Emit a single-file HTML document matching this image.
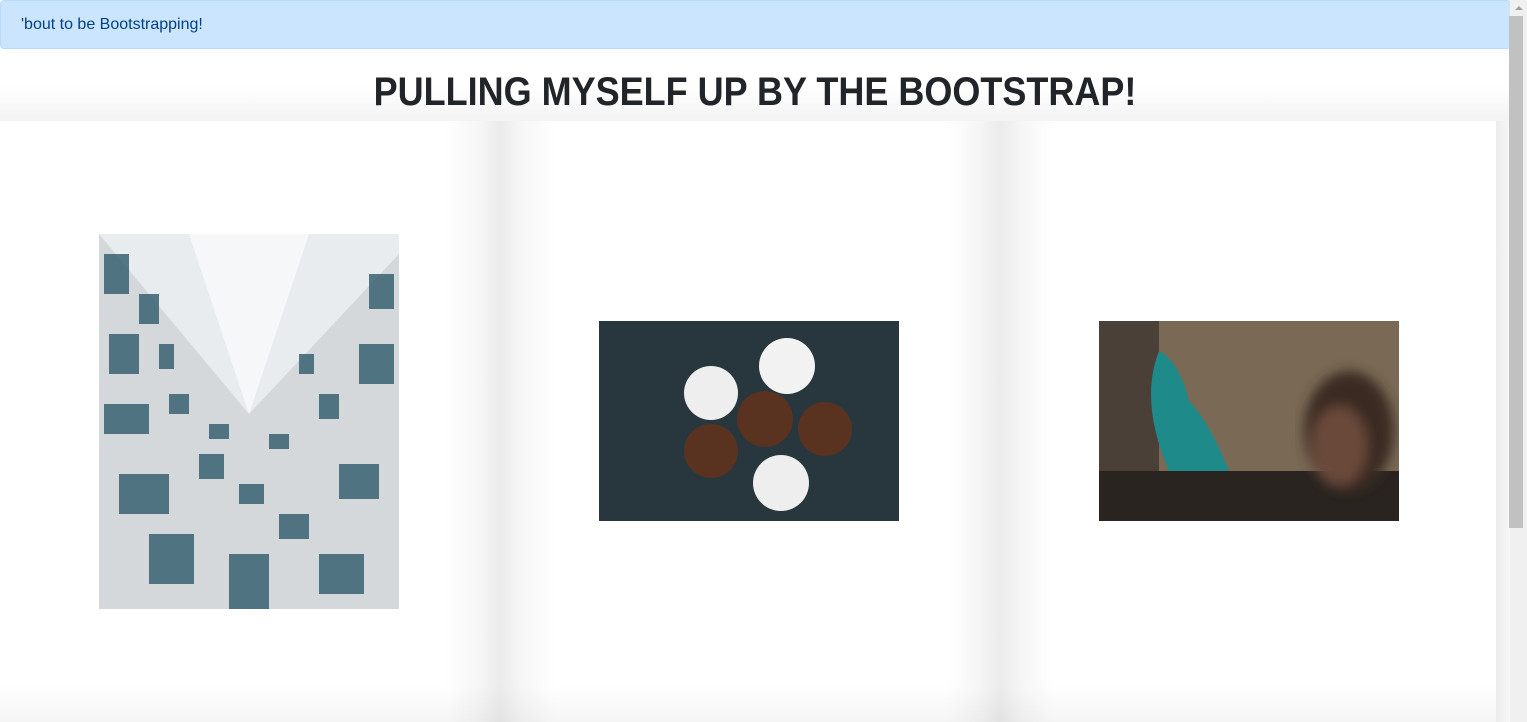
<!DOCTYPE html>
<html><head><style>
*{box-sizing:border-box;margin:0;padding:0}
html,body{width:1527px;height:722px;overflow:hidden;background:#fff;font-family:"Liberation Sans",sans-serif}
.alert{position:absolute;left:0;top:0;width:1511px;height:49px;background:#cce5ff;border:1px solid #b8daff;border-radius:4px;color:#004085;font-size:16px;padding:13px 20px;line-height:22px}
h1{position:absolute;left:0;width:1510px;top:67px;text-align:center;font-size:40px;font-weight:bold;color:#212529;line-height:50px;transform:scaleX(0.9);transform-origin:755px 0}
.band{position:absolute;left:0;top:85px;width:1510px;height:36px;background:linear-gradient(#fff,#f3f3f3)}
.vs{position:absolute;top:121px;height:601px;width:110px;background:linear-gradient(90deg,rgba(0,0,0,0),rgba(0,0,0,.035) 30%,rgba(0,0,0,.08) 50%,rgba(0,0,0,.035) 70%,rgba(0,0,0,0))}
.bot{position:absolute;left:0;top:685px;width:1496px;height:37px;background:linear-gradient(rgba(0,0,0,0),rgba(0,0,0,.04))}
.img{position:absolute}
.rg{position:absolute;left:1496px;top:121px;width:14px;height:601px;background:linear-gradient(90deg,#ececec,#f6f6f6)}
.sb{position:absolute;left:1510px;top:0;width:17px;height:722px;background:#f0f0f0}
.thumb{position:absolute;left:1509px;top:16px;width:14px;height:512px;background:#c1c1c1}
.arr{position:absolute;left:1515px;top:6px;width:0;height:0;border-left:4px solid transparent;border-right:4px solid transparent;border-bottom:4px solid #a0a0a0}
</style></head><body>
<div class="band"></div>
<div class="vs" style="left:445px"></div>
<div class="vs" style="left:945px"></div>
<div class="bot"></div>
<div class="rg"></div>
<div class="alert">'bout to be Bootstrapping!</div>
<h1>PULLING MYSELF UP BY THE BOOTSTRAP!</h1>
<svg class="img" style="left:99px;top:234px" width="300" height="375" viewBox="0 0 300 375">
<rect width="300" height="375" fill="#e9ecee"/>
<polygon points="0,0 150,180 300,20 300,375 0,375" fill="#d4d8da"/>
<polygon points="90,0 150,180 210,0" fill="#f6f7f8"/>
<g fill="#2f5a6a" opacity=".8">
<rect x="5" y="20" width="25" height="40"/><rect x="40" y="60" width="20" height="30"/><rect x="10" y="100" width="30" height="40"/><rect x="60" y="110" width="15" height="25"/>
<rect x="5" y="170" width="45" height="30"/><rect x="70" y="160" width="20" height="20"/><rect x="20" y="240" width="50" height="40"/><rect x="100" y="220" width="25" height="25"/>
<rect x="50" y="300" width="45" height="50"/><rect x="140" y="250" width="25" height="20"/><rect x="130" y="320" width="40" height="55"/><rect x="180" y="280" width="30" height="25"/>
<rect x="220" y="320" width="45" height="40"/><rect x="240" y="230" width="40" height="35"/><rect x="260" y="110" width="35" height="40"/><rect x="220" y="160" width="20" height="25"/>
<rect x="270" y="40" width="25" height="35"/><rect x="200" y="120" width="15" height="20"/><rect x="170" y="200" width="20" height="15"/><rect x="110" y="190" width="20" height="15"/>
</g></svg>
<svg class="img" style="left:599px;top:321px" width="300" height="200" viewBox="0 0 300 200">
<rect width="300" height="200" fill="#27373d"/>
<g><circle cx="112" cy="72" r="27" fill="#eee"/><circle cx="188" cy="45" r="28" fill="#f2f2f2"/><circle cx="166" cy="98" r="28" fill="#5a3320"/><circle cx="226" cy="108" r="27" fill="#5a3320"/><circle cx="112" cy="130" r="27" fill="#5a3320"/><circle cx="182" cy="162" r="28" fill="#eee"/></g>
</svg>
<svg class="img" style="left:1099px;top:321px" width="300" height="200" viewBox="0 0 300 200">
<defs><filter id="b"><feGaussianBlur stdDeviation="6"/></filter></defs>
<rect width="300" height="200" fill="#7a6a55"/>
<rect width="60" height="200" fill="#4a4038"/>
<rect x="0" y="150" width="300" height="50" fill="#2a2420"/>
<path d="M60 30 Q40 80 70 150 L130 150 Q110 100 90 80 Q80 40 60 30Z" fill="#1f8a8a"/>
<g filter="url(#b)"><ellipse cx="250" cy="110" rx="45" ry="60" fill="#3a2a22"/><ellipse cx="240" cy="125" rx="28" ry="40" fill="#6a4a3a"/></g>
</svg>
<div class="sb"></div><div class="thumb"></div><div class="arr"></div>
</body></html>
